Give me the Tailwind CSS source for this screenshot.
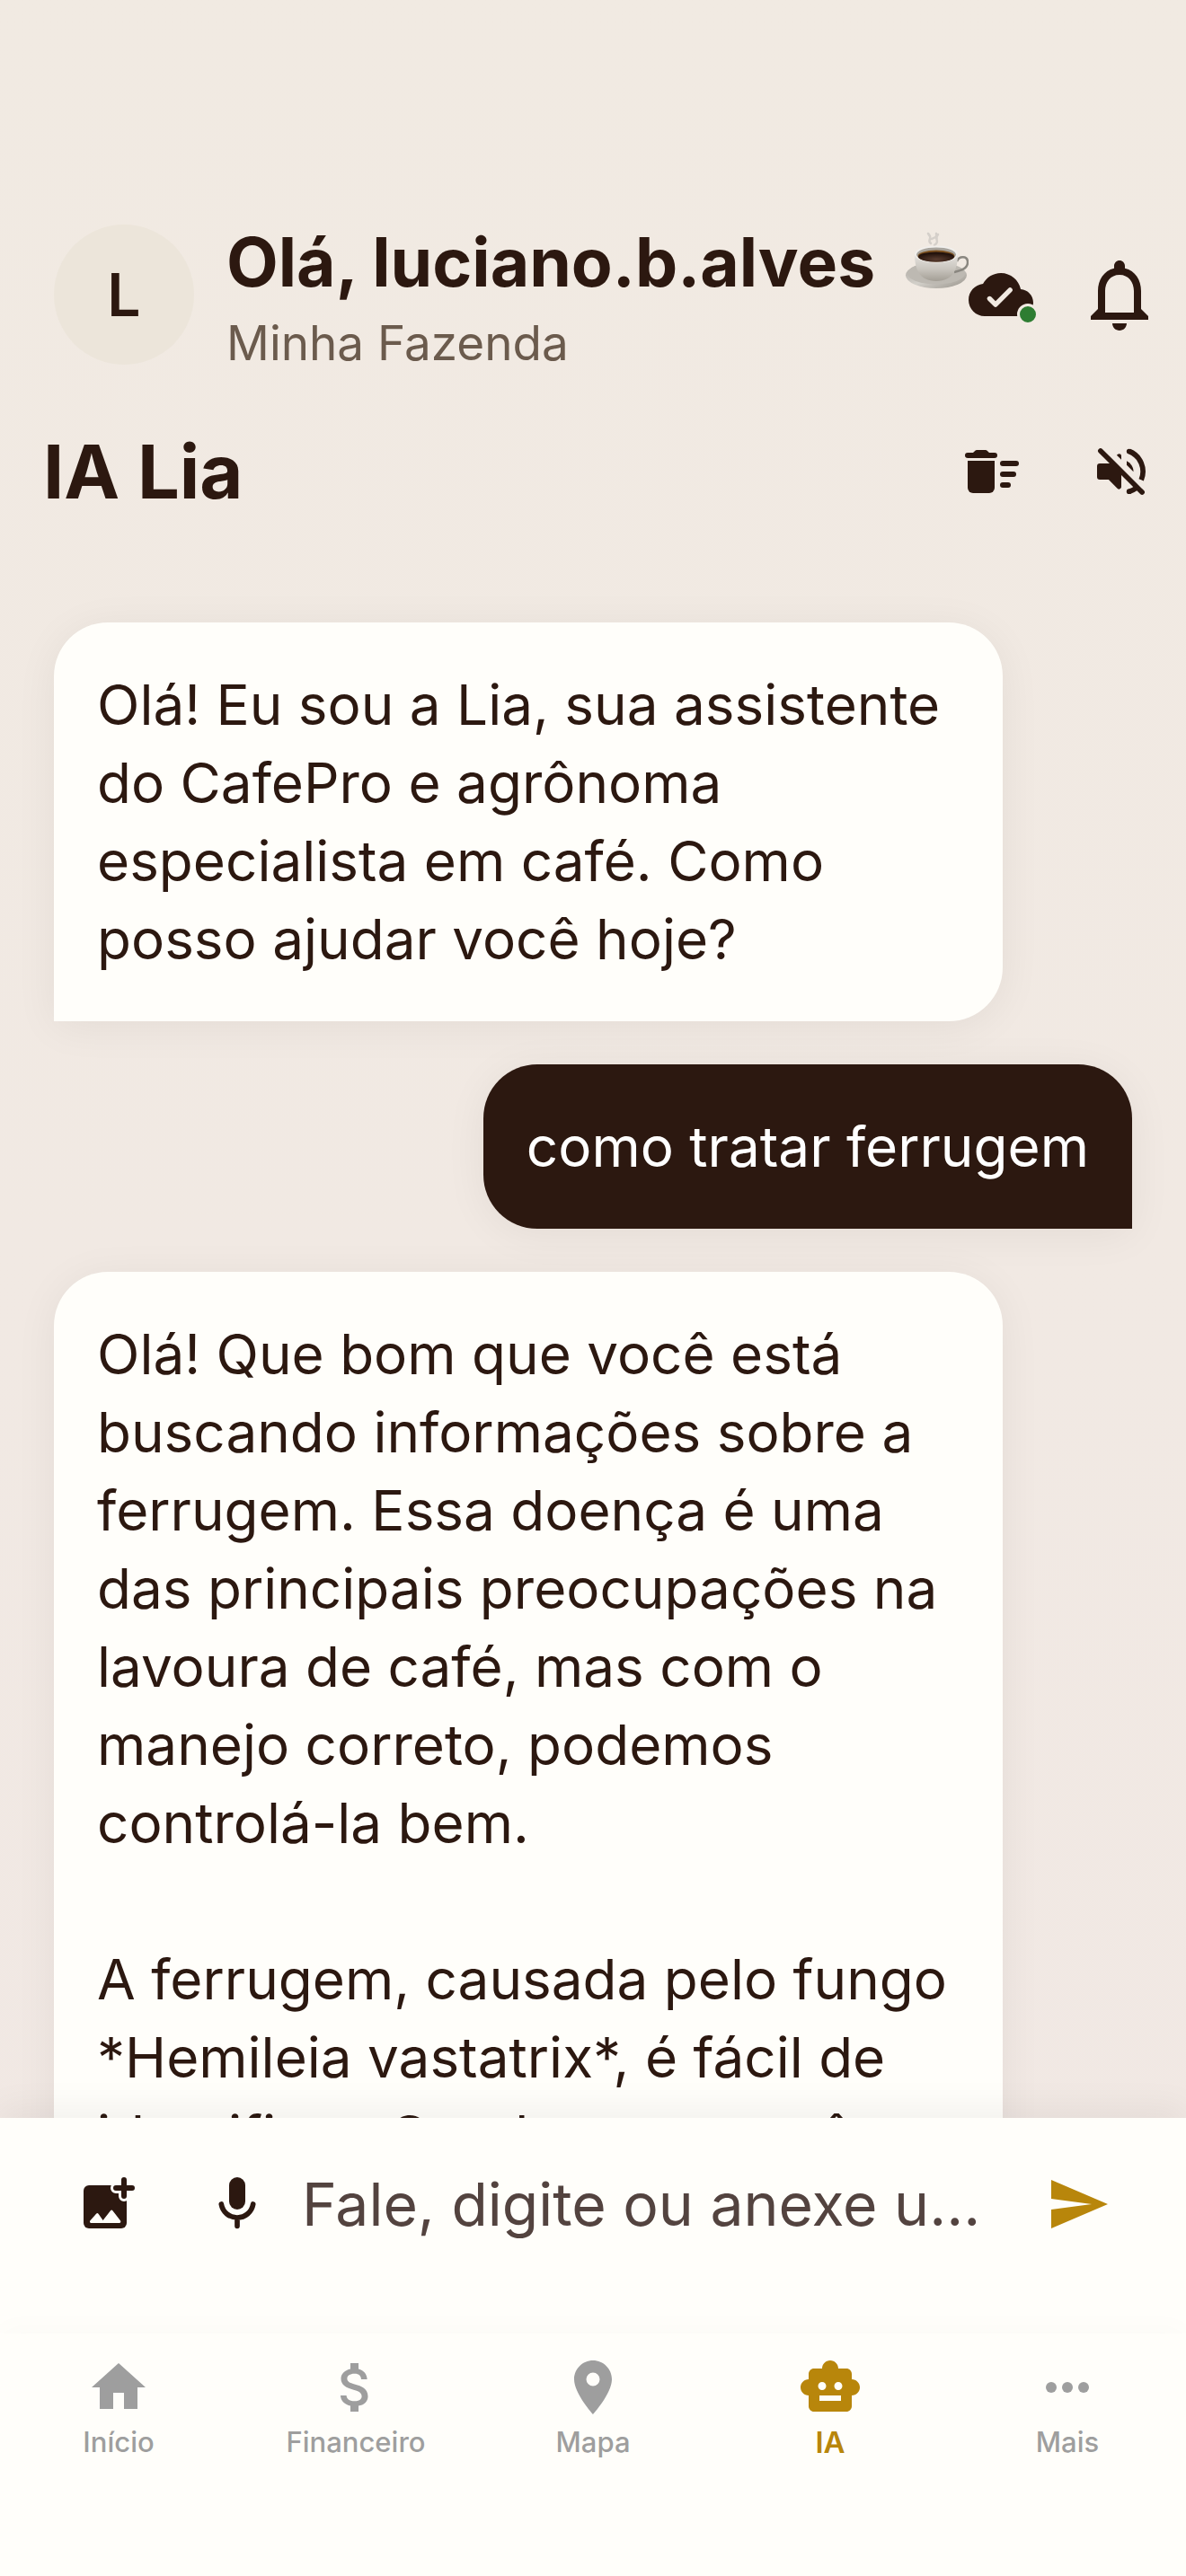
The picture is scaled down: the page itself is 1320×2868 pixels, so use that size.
<!DOCTYPE html>
<html lang="pt-BR">
<head>
  <meta charset="UTF-8">
  <meta name="viewport" content="width=device-width, initial-scale=1.0">
  <script src="https://cdn.jsdelivr.net/npm/@tailwindcss/browser@4"></script>
  <title>CafePro - IA Lia</title>
</head>
<body class="bg-linear-to-b from-[#f1eae2] to-[#f1e8e4] text-[#2c1810] font-['Inter','Liberation_Sans',sans-serif] h-dvh flex flex-col overflow-hidden">

  <!-- Header -->
  <header class="flex items-center pt-[250px] pb-[47px] pl-[60px] pr-[26px]">
    <div class="size-[156px] shrink-0 rounded-full bg-[#ece5da] flex items-center justify-center text-[66px] font-semibold">L</div>
    <div class="flex-1 min-w-0 ml-9 -my-3">
      <div class="flex items-center whitespace-nowrap text-[75px] leading-[108px] font-bold">
        <span>Olá, luciano.b.alves</span>
        <!-- Coffee cup -->
        <svg class="ml-auto size-[72px] shrink-0" viewBox="0 0 72 72" role="img" aria-label="café">
          <defs>
            <linearGradient id="cup" x1="0" y1="0" x2="0" y2="1">
              <stop offset="0" stop-color="#e6e3df"/><stop offset=".55" stop-color="#c9c5be"/><stop offset="1" stop-color="#a39e95"/>
            </linearGradient>
            <linearGradient id="plate" x1="0" y1="0" x2="1" y2="1">
              <stop offset="0" stop-color="#aaa69f"/><stop offset=".5" stop-color="#d3d0ca"/><stop offset="1" stop-color="#98938b"/>
            </linearGradient>
            <radialGradient id="coffee" cx=".5" cy=".75" r=".6">
              <stop offset="0" stop-color="#5a3d30"/><stop offset="1" stop-color="#23120c"/>
            </radialGradient>
          </defs>
          <path d="M30 15c-5-4 3-5-3-11M34 17c7-5-1-6 4-12M31 10c3-2 6-1 5-6" fill="none" stroke="#bdbab7" stroke-width="2.500" stroke-linecap="round" opacity=".55"/>
          <ellipse cx="36" cy="50.500" rx="34" ry="14.500" fill="url(#plate)"/>
          <ellipse cx="36" cy="48.500" rx="32" ry="12" fill="#bdb9b2"/>
          <path d="M59 35c2-6 12-7 12 1 0 7-7 9-15 11" fill="none" stroke="#8a8780" stroke-width="2.500"/>
          <path d="M12 27c0 16 5 30 24 30s24-14 24-30z" fill="url(#cup)"/>
          <ellipse cx="36" cy="27" rx="24" ry="9.500" fill="#f1efec"/>
          <ellipse cx="36" cy="27.500" rx="22" ry="8" fill="#a9a59e"/>
          <ellipse cx="36" cy="29" rx="20.500" ry="6.500" fill="#7d5120"/>
          <ellipse cx="36" cy="30" rx="20" ry="5.500" fill="url(#coffee)"/>
        </svg>
      </div>
      <div class="text-[53px] leading-[72px] text-[#6b5b4d]">Minha Fazenda</div>
    </div>
    <button type="button" class="relative shrink-0" aria-label="Sincronizado">
      <svg class="size-[72px]" viewBox="0 0 24 24" fill="currentColor">
        <path d="M19.35 10.04C18.67 6.59 15.64 4 12 4 9.11 4 6.6 5.64 5.35 8.04 2.34 8.36 0 10.91 0 14c0 3.31 2.69 6 6 6h13c2.76 0 5-2.24 5-5 0-2.64-2.05-4.78-4.65-4.96z"/>
        <path d="M7.800 13.500L10 15.700l5.400-5.400" fill="none" stroke="#f1eae2" stroke-width="1.800" stroke-linecap="round" stroke-linejoin="round"/>
      </svg>
      <span class="absolute -right-1.5 bottom-0.5 size-6 rounded-full bg-[#2e7d32] border-3 border-[#f1eae2]"></span>
    </button>
    <button type="button" class="shrink-0 ml-12" aria-label="Notificações">
      <svg class="size-24" viewBox="0 0 24 24" fill="currentColor">
        <path d="M12 22c1.100 0 2-.9 2-2h-4c0 1.100.9 2 2 2zm6-6v-5c0-3.070-1.630-5.640-4.500-6.320V4c0-.83-.67-1.500-1.500-1.500s-1.500.67-1.500 1.500v.68C7.640 5.360 6 7.920 6 11v5l-2 2v1h16v-1l-2-2zm-2 1H8v-6c0-2.480 1.510-4.500 4-4.500s4 2.020 4 4.500v6z"/>
      </svg>
    </button>
  </header>

  <!-- Title bar -->
  <div class="flex items-center h-36 pl-12">
    <h1 class="flex-1 text-[83px] leading-none font-bold">IA Lia</h1>
    <button type="button" class="size-36 flex items-center justify-center" aria-label="Limpar conversa">
      <svg class="size-[72px]" viewBox="0 0 24 24" fill="currentColor">
        <path d="M3 5h2l.7-.7A1 1 0 0 1 6.400 4h3.200a1 1 0 0 1 .7.300L11 5h2a1 1 0 0 1 0 2H3a1 1 0 0 1 0-2z"/>
        <path d="M3 8h10v10a2 2 0 0 1-2 2H5a2 2 0 0 1-2-2z"/>
        <rect x="15" y="8" width="7" height="2" rx="1"/>
        <rect x="15" y="12" width="6" height="2" rx="1"/>
        <rect x="15" y="16" width="4" height="2" rx="1"/>
      </svg>
    </button>
    <button type="button" class="size-36 flex items-center justify-center" aria-label="Ativar som">
      <svg class="size-[72px]" viewBox="0 0 24 24" fill="currentColor">
        <path d="M4.300 4.300l15.400 15.400" stroke="currentColor" stroke-width="1.900" stroke-linecap="round"/>
        <path d="M7.600 9H4a1 1 0 0 0-1 1v4a1 1 0 0 0 1 1h3.300l3.300 3.300c.5.500 1.400.2 1.400-.6V12L8.500 8.500z"/>
        <path d="M10.300 5.900l.4-.3c.5-.4 1.300-.1 1.300.6v1.400z"/>
        <path d="M14 8.100c1.500.8 2.500 2.200 2.500 3.900v.1L14 9.600z"/>
        <path d="M15 4.500a8.100 8.100 0 0 1 4.400 10.600M15 19.400c1-.3 1.800-.7 2.600-1.300" fill="none" stroke="currentColor" stroke-width="1.900"/>
        <circle cx="14.900" cy="4.500" r=".95"/>
        <circle cx="14.900" cy="19.400" r=".95"/>
      </svg>
    </button>
  </div>

  <!-- Messages -->
  <main class="flex-1 min-h-0 overflow-hidden flex flex-col gap-12 px-[60px] pt-24 text-[62px] leading-[87px]">
    <div class="shrink-0 self-start w-[88%] rounded-[60px] rounded-bl-none bg-[#fffefa] p-12 shadow-[0_6px_48px_rgb(0_0_0/0.06)]">
      <p>Olá! Eu sou a Lia, sua assistente do CafePro e agrônoma especialista em café. Como posso ajudar você hoje?</p>
    </div>
    <div class="shrink-0 self-end max-w-[88%] rounded-[60px] rounded-br-none bg-[#2c1810] text-white p-12 shadow-[0_6px_48px_rgb(0_0_0/0.06)]">
      <p>como tratar ferrugem</p>
    </div>
    <div class="shrink-0 self-start w-[88%] rounded-[60px] rounded-bl-none bg-[#fffefa] p-12 shadow-[0_6px_48px_rgb(0_0_0/0.06)]">
      <p class="mb-[87px]">Olá! Que bom que você está buscando informações sobre a ferrugem. Essa doença é uma das principais preocupações na lavoura de café, mas com o manejo correto, podemos controlá-la bem.</p>
      <p>A ferrugem, causada pelo fungo *Hemileia vastatrix*, é fácil de identificar. Geralmente, você</p>
    </div>
  </main>

  <!-- Message box -->
  <form class="relative flex items-center bg-[#fffefa] px-12 pt-6 pb-[72px] shadow-[0_-12px_36px_rgb(0_0_0/0.05)]">
    <button type="button" class="size-36 shrink-0 flex items-center justify-center" aria-label="Anexar imagem">
      <svg class="size-[72px]" viewBox="0 0 24 24">
        <rect x="3" y="5" width="16" height="16" rx="2" fill="#2c1810"/>
        <path d="M18 3v6M15 6h6" stroke="#fffefa" stroke-width="4" stroke-linecap="round"/>
        <path d="M18 3v6M15 6h6" stroke="#2c1810" stroke-width="2" stroke-linecap="round"/>
        <path d="M5.800 19h10.500c.4 0 .6-.4.400-.8l-2.900-3.800a.5.500 0 0 0-.8 0L10.200 18l-1.700-2.400a.5.500 0 0 0-.8 0l-2.300 2.600c-.2.400 0 .8.400.8z" fill="#fffefa"/>
      </svg>
    </button>
    <button type="button" class="size-36 shrink-0 flex items-center justify-center" aria-label="Gravar áudio">
      <svg class="size-[72px]" viewBox="0 0 24 24" fill="none" stroke="#2c1810" stroke-width="1.900" stroke-linecap="round">
        <rect x="9" y="2" width="6" height="12" rx="3" fill="#2c1810" stroke="none"/>
        <path d="M6.100 12c.5 2.900 2.900 5 5.900 5s5.400-2.100 5.900-5M12 17v3.100"/>
      </svg>
    </button>
    <input type="text" aria-label="Mensagem" placeholder="Fale, digite ou anexe uma imagem" class="flex-1 min-w-0 h-36 text-[66px] text-ellipsis placeholder:text-[#53433f] outline-none">
    <button type="submit" class="size-36 shrink-0 flex items-center justify-center text-[#b8860b]" aria-label="Enviar">
      <svg class="size-[72px]" viewBox="0 0 24 24" fill="currentColor">
        <path d="M2 21l21-9L2 3v7l15 2-15 2z"/>
      </svg>
    </button>
  </form>

  <!-- Bottom navigation -->
  <nav class="relative flex bg-[#fffefa] pt-6 h-[270px] text-[31px] leading-[42px] font-medium text-[#9e9e9e] shadow-[0_-6px_30px_rgb(0_0_0/0.02)]">
    <a href="#" class="flex-1 flex flex-col items-center gap-1">
      <svg class="size-[72px]" viewBox="0 0 24 24" fill="currentColor"><path d="M10 20v-6h4v6h5v-8h3L12 3 2 12h3v8z"/></svg>
      Início
    </a>
    <a href="#" class="flex-1 flex flex-col items-center gap-1">
      <svg class="size-[72px]" viewBox="0 0 24 24" fill="currentColor"><path d="M11.800 10.900c-2.270-.59-3-1.200-3-2.150 0-1.090 1.010-1.850 2.700-1.850 1.780 0 2.440.85 2.500 2.100h2.210c-.07-1.720-1.120-3.300-3.210-3.810V3h-3v2.160c-1.940.42-3.500 1.680-3.500 3.610 0 2.310 1.910 3.460 4.700 4.130 2.500.6 3 1.480 3 2.410 0 .69-.49 1.790-2.700 1.790-2.060 0-2.870-.92-2.980-2.100h-2.200c.12 2.190 1.760 3.420 3.680 3.830V21h3v-2.150c1.950-.37 3.500-1.500 3.500-3.550 0-2.840-2.430-3.810-4.700-4.400z"/></svg>
      Financeiro
    </a>
    <a href="#" class="flex-1 flex flex-col items-center gap-1">
      <svg class="size-[72px]" viewBox="0 0 24 24" fill="currentColor"><path d="M12 2C8.130 2 5 5.130 5 9c0 5.250 7 13 7 13s7-7.750 7-13c0-3.870-3.130-7-7-7zm0 9.500a2.500 2.500 0 0 1 0-5 2.500 2.500 0 0 1 0 5z"/></svg>
      Mapa
    </a>
    <a href="#" class="flex-1 flex flex-col items-center gap-1 text-[33px] font-semibold text-[#b8860b]" aria-current="page">
      <svg class="size-[72px]" viewBox="0 0 24 24" fill="currentColor"><path d="M20 9V7c0-1.100-.9-2-2-2h-3c0-1.660-1.340-3-3-3S9 3.340 9 5H6c-1.100 0-2 .9-2 2v2c-1.660 0-3 1.340-3 3s1.340 3 3 3v4c0 1.100.9 2 2 2h12c1.100 0 2-.9 2-2v-4c1.660 0 3-1.340 3-3s-1.340-3-3-3zM7.500 11.500c0-.83.67-1.500 1.500-1.500s1.500.67 1.500 1.500S9.830 13 9 13s-1.500-.67-1.500-1.500zM16 17H8v-2h8v2zm-1-4c-.83 0-1.500-.67-1.500-1.500S14.170 10 15 10s1.500.67 1.500 1.500S15.830 13 15 13z"/></svg>
      IA
    </a>
    <a href="#" class="flex-1 flex flex-col items-center gap-1">
      <svg class="size-[72px]" viewBox="0 0 24 24" fill="currentColor"><circle cx="6" cy="12" r="2"/><circle cx="12" cy="12" r="2"/><circle cx="18" cy="12" r="2"/></svg>
      Mais
    </a>
  </nav>

</body>
</html>
